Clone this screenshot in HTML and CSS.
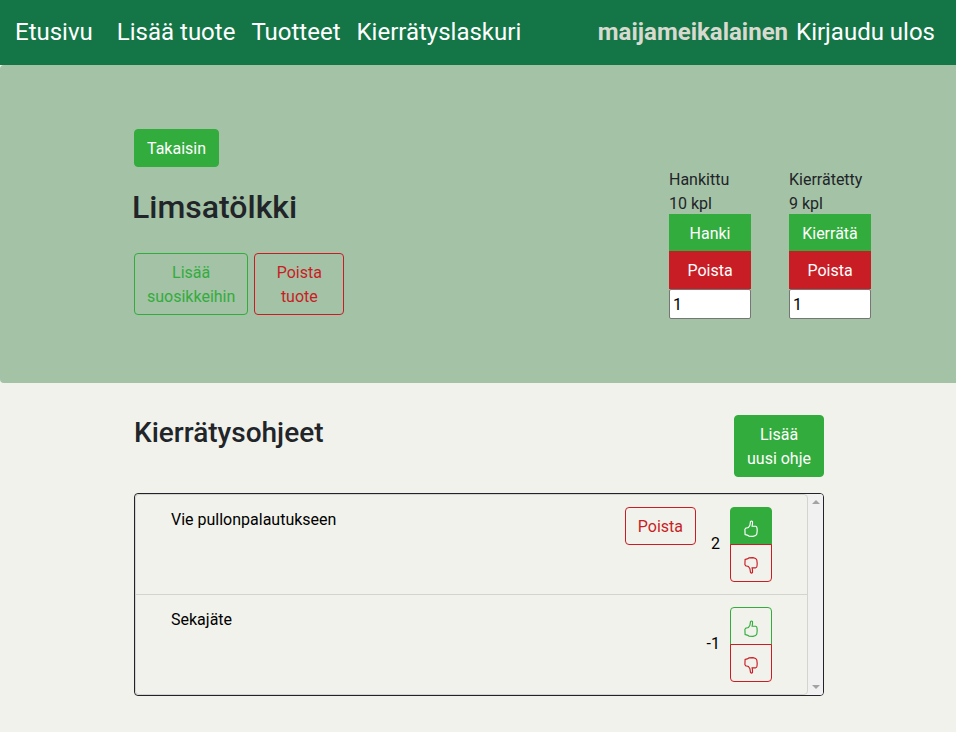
FILE: index.html
```html
<!DOCTYPE html>
<html lang="fi">
<head>
<meta charset="utf-8">
<title>Limsatölkki</title>
<link rel="stylesheet" href="styles.css">
</head>
<body>
<svg width="0" height="0" class="defs" aria-hidden="true">
  <symbol id="thumb" viewBox="0 0 14 17">
    <path d="M.9 9.5L1.6 8.3L4.4 7.5L5.9 5.4L6.5 1.6Q7.6.3 8.5 1.6L8.5 3.8L8.1 6.2L11.7 6.2Q12.9 6.4 13 8L13.2 10.6L12.8 14L11.6 15.6L9 16.3L5 16.1L3.2 15.1L1.1 14.5Z"/>
  </symbol>
</svg>
<nav class="navbar">
  <div class="links">
    <a class="brand">Etusivu</a>
    <a>Lisää tuote</a>
    <a>Tuotteet</a>
    <a>Kierrätyslaskuri</a>
  </div>
  <div class="account"><b>maijameikalainen</b><a>Kirjaudu ulos</a></div>
</nav>
<header class="hero">
  <div class="product">
    <button class="btn green">Takaisin</button>
    <h1>Limsatölkki</h1>
    <div class="actions">
      <button class="btn outline-green">Lisää<br>suosikkeihin</button>
      <button class="btn outline-red remove">Poista<br>tuote</button>
    </div>
  </div>
  <div class="counters">
    <div class="counter">
      <span>Hankittu</span><span>10 kpl</span>
      <button class="btn green">Hanki</button>
      <button class="btn red">Poista</button>
      <input value="1">
    </div>
    <div class="counter">
      <span>Kierrätetty</span><span>9 kpl</span>
      <button class="btn green">Kierrätä</button>
      <button class="btn red">Poista</button>
      <input value="1">
    </div>
  </div>
</header>
<main>
  <div class="heading">
    <h2>Kierrätysohjeet</h2>
    <button class="btn green">Lisää<br>uusi ohje</button>
  </div>
  <div class="scrollbox">
    <ul class="list">
      <li>
        <span class="title">Vie pullonpalautukseen</span>
        <button class="btn outline-red">Poista</button>
        <span class="score">2</span>
        <div class="votes">
          <button class="btn green up"><svg><use href="#thumb"/></svg></button>
          <button class="btn outline-red down"><svg><use href="#thumb"/></svg></button>
        </div>
      </li>
      <li>
        <span class="title">Sekajäte</span>
        <span class="score">-1</span>
        <div class="votes">
          <button class="btn outline-green up"><svg><use href="#thumb"/></svg></button>
          <button class="btn outline-red down"><svg><use href="#thumb"/></svg></button>
        </div>
      </li>
    </ul>
    <div class="scrollbar"><i class="arrow-up"></i><i class="arrow-down"></i></div>
  </div>
</main>
</body>
</html>
```
FILE: styles.css
```css
* { box-sizing: border-box; }
body {
  margin: 0;
  background: #f1f2eb;
  color: #212529;
  font: 16px/24px Roboto, sans-serif;
}
.defs { display: block; }
h1, h2 { margin: 0; font-weight: 500; }

.navbar {
  display: flex;
  justify-content: space-between;
  height: 65px;
  padding: 14px 21px 0 15px;
  background: #147547;
  color: #fff;
  font-size: 24px;
  line-height: 36px;
}
.links { display: flex; gap: 16px; }
.brand { margin-right: 8px; }
.account { display: flex; gap: 8px; }
.account b { color: #d8dad0; }

.btn {
  display: block;
  padding: 7px 12px 5px;
  border: 1px solid transparent;
  border-radius: 4px;
  background: none;
  font: inherit;
  text-align: center;
}
.green { background: #33ac3e; border-color: #33ac3e; color: #fff; }
.red { background: #c91d25; border-color: #c91d25; color: #fff; }
.outline-green { border-color: #33ac3e; color: #33ac3e; }
.outline-red { border-color: #c91d25; color: #c91d25; }

.hero {
  display: flex;
  justify-content: space-between;
  height: 318px;
  padding: 64px 85px 0 134px;
  border-radius: 4px 0 0 4px;
  background: #a4c2a5;
}
.hero h1 {
  margin: 21px 0 26px -2px;
  font-size: 32px;
  line-height: 39px;
}
.actions { display: flex; gap: 6px; }
.remove { width: 90px; }
.counters { display: flex; gap: 38px; padding-top: 39px; }
.counter { display: flex; flex-direction: column; width: 82px; }
.counter span { height: 24px; white-space: nowrap; }
.counter span + span { height: 22px; }
.counter .btn { height: 38px; padding: 7px 0 5px; border-radius: 0; }
.counter .green { height: 37px; padding-bottom: 4px; }
.counter input {
  width: 82px;
  height: 30px;
  padding: 1px 3px;
  border: 1px solid #767676;
  border-radius: 2px;
  background: #fff;
  color: #000;
  font: inherit;
}

main { width: 690px; margin: 32px 0 0 134px; }
.heading { display: flex; justify-content: space-between; }
.heading h2 { font-size: 28px; line-height: 36px; }
.scrollbox {
  display: flex;
  height: 203px;
  margin-top: 16px;
  border: 1px solid #212529;
  border-radius: 4px;
  overflow: hidden;
}
.list {
  flex: 1;
  margin: 0;
  padding: 0;
  border: 1px solid #d3d4ce;
  border-radius: 4px;
  list-style: none;
  color: #000;
}
.list li {
  display: flex;
  align-items: flex-start;
  height: 100px;
  padding: 12px 35px 0;
  border-bottom: 1px solid #d3d4ce;
}
.list li:last-child { border-bottom: 0; }
.title { flex: 1; padding-top: 1px; }
.score { width: 24px; margin: 25px 10px 0 0; text-align: right; }
.votes { width: 42px; }
.votes .btn { display: flex; justify-content: center; width: 42px; height: 38px; padding: 12px 0 0; }
.votes svg { width: 14px; height: 17px; fill: none; stroke: currentColor; stroke-width: 1.15; }
.votes .up { border-radius: 4px 4px 0 0; }
.votes .down { margin-top: -1px; border-radius: 0 0 4px 4px; position: relative; }
.votes .down svg { transform: scaleY(-1); }
.scrollbar {
  display: flex;
  flex-direction: column;
  justify-content: space-between;
  align-items: center;
  width: 15px;
  padding: 6px 0;
  background: #f1f1f1;
}
.scrollbar i { border: 4px solid transparent; }
.arrow-up { border-top: 0 !important; border-bottom-color: #a3a3a3 !important; }
.arrow-down { border-bottom: 0 !important; border-top-color: #a3a3a3 !important; }
```
